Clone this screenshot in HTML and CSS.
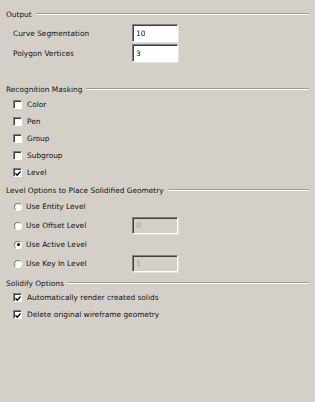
FILE: index.html
```html
<!DOCTYPE html>
<html lang="en">
<head>
  <meta charset="UTF-8">
  <meta name="viewport" content="width=device-width, initial-scale=1.0">
  <title>Solidify Settings</title>
  <link rel="stylesheet" href="styles.css">
</head>
<body>
  <main class="panel">
    <section class="group group-output">
      <div class="group-title"><span>Output</span><span class="rule"></span></div>
      <div class="fields">
        <div class="field">
          <span class="field-label">Curve Segmentation</span>
          <span class="textbox">10</span>
        </div>
        <div class="field">
          <span class="field-label">Polygon Vertices</span>
          <span class="textbox">3</span>
        </div>
      </div>
    </section>

    <section class="group group-masking">
      <div class="group-title"><span>Recognition Masking</span><span class="rule"></span></div>
      <div class="checks">
        <div class="check"><span class="box"></span>Color</div>
        <div class="check"><span class="box"></span>Pen</div>
        <div class="check"><span class="box"></span>Group</div>
        <div class="check"><span class="box"></span>Subgroup</div>
        <div class="check"><span class="box is-checked"><svg viewBox="0 0 7 7" width="7" height="7"><path d="M0.5 3.2 L2.6 5.4 L6.5 1.2" fill="none" stroke="#000" stroke-width="1.6"/></svg></span>Level</div>
      </div>
    </section>

    <section class="group group-level">
      <div class="group-title"><span>Level Options to Place Solidified Geometry</span><span class="rule"></span></div>
      <div class="radios">
        <div class="radio-row"><span class="radio"><span class="radio-dot"></span>Use Entity Level</span></div>
        <div class="radio-row">
          <span class="radio"><span class="radio-dot"></span>Use Offset Level</span>
          <span class="textbox is-disabled">0</span>
        </div>
        <div class="radio-row"><span class="radio"><span class="radio-dot is-on"></span>Use Active Level</span></div>
        <div class="radio-row">
          <span class="radio"><span class="radio-dot"></span>Use Key In Level</span>
          <span class="textbox is-disabled">1</span>
        </div>
      </div>
    </section>

    <section class="group group-solidify">
      <div class="group-title"><span>Solidify Options</span><span class="rule"></span></div>
      <div class="checks">
        <div class="check"><span class="box is-checked"><svg viewBox="0 0 7 7" width="7" height="7"><path d="M0.5 3.2 L2.6 5.4 L6.5 1.2" fill="none" stroke="#000" stroke-width="1.6"/></svg></span>Automatically render created solids</div>
        <div class="check"><span class="box is-checked"><svg viewBox="0 0 7 7" width="7" height="7"><path d="M0.5 3.2 L2.6 5.4 L6.5 1.2" fill="none" stroke="#000" stroke-width="1.6"/></svg></span>Delete original wireframe geometry</div>
      </div>
    </section>
  </main>
</body>
</html>
```

FILE: styles.css
```css
html, body {
  height: 100%;
}

body {
  margin: 0;
  background-color: #d4d0c8;
  color: #111111;
  font-family: "DejaVu Sans", "Liberation Sans", sans-serif;
  font-size: 7.4px;
}

.panel {
  padding: 7px 6px 0 6px;
}

.group-title {
  height: 14px;
  display: flex;
  align-items: center;
  gap: 4px;
  white-space: nowrap;
}

.rule {
  flex: 1;
  height: 0;
  border-top: 1px solid #a09d96;
  border-bottom: 1px solid #ffffff;
}

.group-masking {
  margin-top: 19px;
}

.group-level {
  margin-top: 2px;
}

.group-solidify {
  margin-top: 3px;
}

/* output fields */
.fields {
  margin-top: 2px;
}

.field {
  height: 20px;
  display: flex;
  align-items: center;
  padding-left: 7px;
}

.field-label {
  width: 119px;
}

.textbox {
  box-sizing: border-box;
  width: 46px;
  height: 18px;
  display: flex;
  align-items: center;
  padding-left: 3px;
  background-color: #ffffff;
  border-top: 1px solid #808080;
  border-left: 1px solid #808080;
  border-right: 1px solid #ffffff;
  border-bottom: 1px solid #ffffff;
  box-shadow: inset 1px 1px 0 #404040, 1px 1px 0 #e4e1dc;
}

.textbox.is-disabled {
  height: 17px;
  background-color: #d4d0c8;
  color: #a09d96;
}

/* checkboxes */
.check {
  height: 17px;
  display: flex;
  align-items: center;
  gap: 5px;
  padding-left: 7px;
}

.group-solidify .checks {
  margin-top: -1px;
}

.box {
  box-sizing: border-box;
  width: 9px;
  height: 9px;
  display: flex;
  align-items: center;
  justify-content: center;
  background-color: #ffffff;
  border-top: 1px solid #808080;
  border-left: 1px solid #808080;
  border-right: 1px solid #ffffff;
  border-bottom: 1px solid #ffffff;
  box-shadow: inset 1px 1px 0 #404040;
}

.box svg {
  margin: 1px 0 0 1px;
}

/* radios */
.radio-row {
  height: 19px;
  display: flex;
  align-items: center;
  padding-left: 8px;
}

.radio {
  width: 118px;
  display: flex;
  align-items: center;
  gap: 4px;
}

.radio-dot {
  box-sizing: border-box;
  width: 8px;
  height: 8px;
  border-radius: 50%;
  background-color: #ffffff;
  border: 1px solid;
  border-color: #808080 #ffffff #ffffff #808080;
  display: flex;
  align-items: center;
  justify-content: center;
}

.radio-dot.is-on::after {
  content: "";
  width: 3px;
  height: 3px;
  border-radius: 50%;
  background-color: #000000;
}
```
